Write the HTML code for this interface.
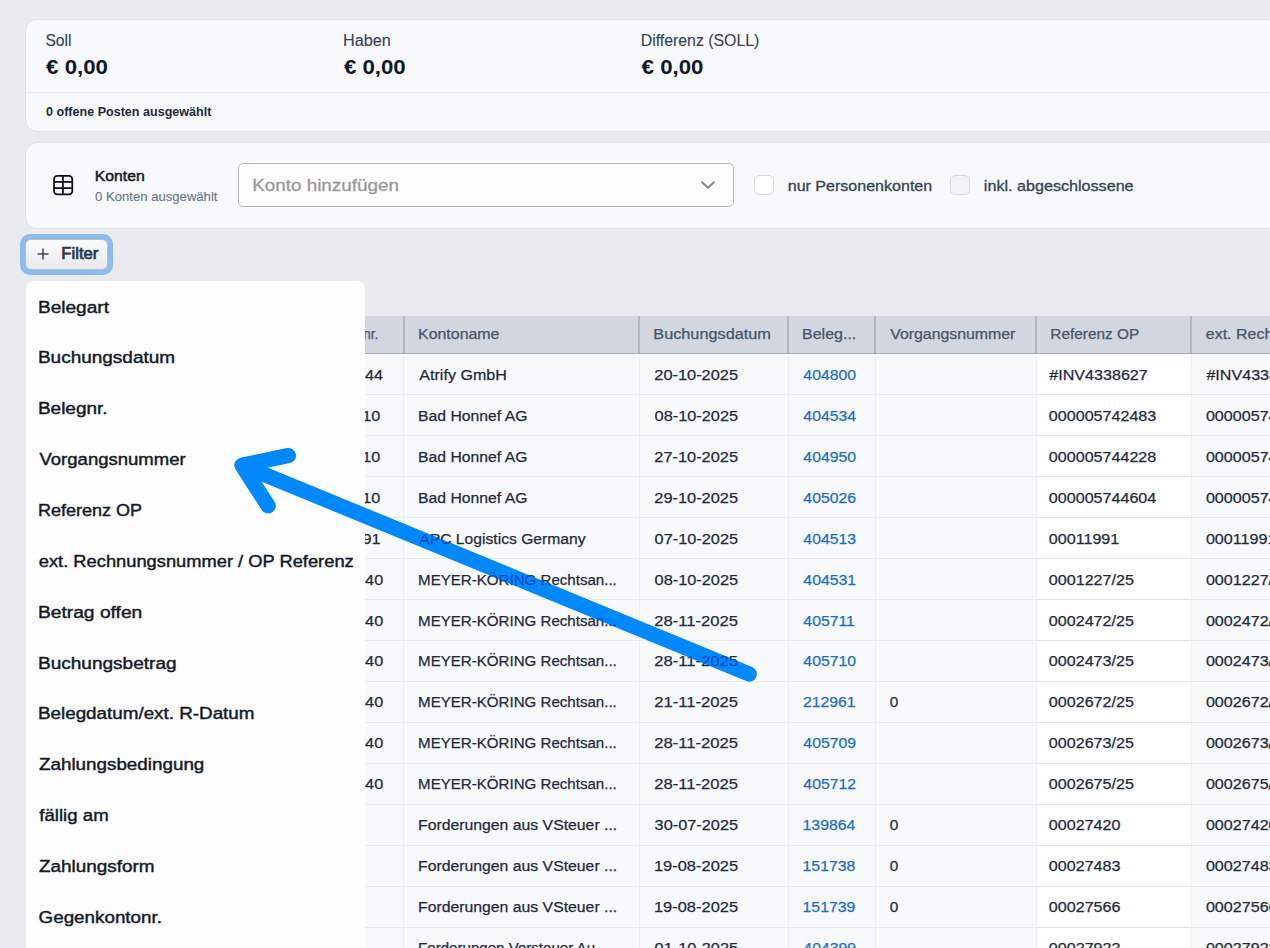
<!DOCTYPE html><html><head><meta charset="utf-8"><style>
*{box-sizing:border-box;margin:0;padding:0}
html,body{width:1270px;height:948px;overflow:hidden}
body{background:#e9ebef;font-family:"Liberation Sans",sans-serif;position:relative}
.a{position:absolute}
svg.a{left:0;top:0;overflow:visible}
text{font-family:"Liberation Sans",sans-serif;white-space:pre}
.card{position:absolute;background:#f8f9fb;border:1px solid #dfe2e7;border-radius:12px}
</style></head><body>
<div class="card" style="left:25px;top:19px;width:1300px;height:113px"></div>
<div class="a" style="left:26px;top:92px;width:1260px;height:1px;background:#e3e6ea"></div>
<div class="card" style="left:25px;top:142px;width:1300px;height:87px"></div>
<svg class="a" style="left:45px;top:168px" width="36" height="36" viewBox="0 0 36 36" fill="none" stroke="#0b1020" stroke-width="1.75"><rect x="9.05" y="7.85" width="18.2" height="18.6" rx="3.3"/><line x1="9" y1="13.9" x2="27.2" y2="13.9"/><line x1="9" y1="20.1" x2="27.2" y2="20.1"/><line x1="17.9" y1="7.9" x2="17.9" y2="26.4"/></svg>
<div class="a" style="left:238px;top:163px;width:496px;height:44px;border:1px solid #b3bbc8;border-radius:5px;background:#fdfdfe"></div>
<svg class="a" style="left:699px;top:179px" width="18" height="12" viewBox="0 0 18 12" fill="none" stroke="#7d889a" stroke-width="2" stroke-linecap="round" stroke-linejoin="round"><polyline points="3,3.3 9,8.8 14.8,3.3"/></svg>
<div class="a" style="left:754px;top:175px;width:20px;height:20px;border:1px solid #d5d9e0;border-radius:5px;background:#fff"></div>
<div class="a" style="left:950px;top:175px;width:20px;height:20px;border:1px solid #d5d9e0;border-radius:5px;background:#f1f3f6"></div>
<div class="a" style="left:20px;top:234px;width:93px;height:41px;border-radius:10px;background:#8cbbec"></div>
<div class="a" style="left:25px;top:239px;width:83px;height:31px;border-radius:6px;background:linear-gradient(#fbfbfc,#e9eaee);border:1px solid #b9bec8"></div>
<svg class="a" style="left:36px;top:247px" width="14" height="14" viewBox="0 0 14 14" stroke="#1e293b" stroke-width="1.25"><line x1="7" y1="1.5" x2="7" y2="12.5"/><line x1="1.5" y1="7" x2="12.5" y2="7"/></svg>
<div class="a" style="left:27px;top:316px;width:1300px;height:37px;background:#d1d6df"></div>
<div class="a" style="left:27px;top:353px;width:1300px;height:1px;background:#a3acba"></div>
<div class="a" style="left:27px;top:354px;width:1300px;height:700px;background:#f8f9fb"></div>
<div class="a" style="left:1037px;top:354px;width:154px;height:700px;background:#fefefe"></div>
<div class="a" style="left:403px;top:316px;width:2px;height:37px;background:#aeb6c3"></div>
<div class="a" style="left:638px;top:316px;width:2px;height:37px;background:#aeb6c3"></div>
<div class="a" style="left:787px;top:316px;width:2px;height:37px;background:#aeb6c3"></div>
<div class="a" style="left:874px;top:316px;width:2px;height:37px;background:#aeb6c3"></div>
<div class="a" style="left:1035px;top:316px;width:2px;height:37px;background:#aeb6c3"></div>
<div class="a" style="left:1190px;top:316px;width:2px;height:37px;background:#aeb6c3"></div>
<div class="a" style="left:403px;top:354px;width:1px;height:700px;background:#eceef2"></div>
<div class="a" style="left:639px;top:354px;width:1px;height:700px;background:#eceef2"></div>
<div class="a" style="left:788px;top:354px;width:1px;height:700px;background:#eceef2"></div>
<div class="a" style="left:875px;top:354px;width:1px;height:700px;background:#eceef2"></div>
<div class="a" style="left:1036px;top:354px;width:1px;height:700px;background:#eceef2"></div>
<div class="a" style="left:1191px;top:354px;width:1px;height:700px;background:#eceef2"></div>
<div class="a" style="left:27px;top:394.17px;width:1300px;height:1px;background:#e8eaee"></div>
<div class="a" style="left:1037px;top:394.17px;width:154px;height:1px;background:#dfe2e8"></div>
<div class="a" style="left:27px;top:435.14px;width:1300px;height:1px;background:#e8eaee"></div>
<div class="a" style="left:1037px;top:435.14px;width:154px;height:1px;background:#dfe2e8"></div>
<div class="a" style="left:27px;top:476.11px;width:1300px;height:1px;background:#e8eaee"></div>
<div class="a" style="left:1037px;top:476.11px;width:154px;height:1px;background:#dfe2e8"></div>
<div class="a" style="left:27px;top:517.08px;width:1300px;height:1px;background:#e8eaee"></div>
<div class="a" style="left:1037px;top:517.08px;width:154px;height:1px;background:#dfe2e8"></div>
<div class="a" style="left:27px;top:558.05px;width:1300px;height:1px;background:#e8eaee"></div>
<div class="a" style="left:1037px;top:558.05px;width:154px;height:1px;background:#dfe2e8"></div>
<div class="a" style="left:27px;top:599.02px;width:1300px;height:1px;background:#e8eaee"></div>
<div class="a" style="left:1037px;top:599.02px;width:154px;height:1px;background:#dfe2e8"></div>
<div class="a" style="left:27px;top:639.99px;width:1300px;height:1px;background:#e8eaee"></div>
<div class="a" style="left:1037px;top:639.99px;width:154px;height:1px;background:#dfe2e8"></div>
<div class="a" style="left:27px;top:680.96px;width:1300px;height:1px;background:#e8eaee"></div>
<div class="a" style="left:1037px;top:680.96px;width:154px;height:1px;background:#dfe2e8"></div>
<div class="a" style="left:27px;top:721.93px;width:1300px;height:1px;background:#e8eaee"></div>
<div class="a" style="left:1037px;top:721.93px;width:154px;height:1px;background:#dfe2e8"></div>
<div class="a" style="left:27px;top:762.90px;width:1300px;height:1px;background:#e8eaee"></div>
<div class="a" style="left:1037px;top:762.90px;width:154px;height:1px;background:#dfe2e8"></div>
<div class="a" style="left:27px;top:803.87px;width:1300px;height:1px;background:#e8eaee"></div>
<div class="a" style="left:1037px;top:803.87px;width:154px;height:1px;background:#dfe2e8"></div>
<div class="a" style="left:27px;top:844.84px;width:1300px;height:1px;background:#e8eaee"></div>
<div class="a" style="left:1037px;top:844.84px;width:154px;height:1px;background:#dfe2e8"></div>
<div class="a" style="left:27px;top:885.81px;width:1300px;height:1px;background:#e8eaee"></div>
<div class="a" style="left:1037px;top:885.81px;width:154px;height:1px;background:#dfe2e8"></div>
<div class="a" style="left:27px;top:926.78px;width:1300px;height:1px;background:#e8eaee"></div>
<div class="a" style="left:1037px;top:926.78px;width:154px;height:1px;background:#dfe2e8"></div>
<div class="a" style="left:27px;top:967.75px;width:1300px;height:1px;background:#e8eaee"></div>
<div class="a" style="left:1037px;top:967.75px;width:154px;height:1px;background:#dfe2e8"></div>
<svg class="a" width="1270" height="948"><text x="45.38" y="46.10" font-size="15.84" textLength="25.99" lengthAdjust="spacingAndGlyphs" fill="#334155" stroke="#334155" stroke-width="0.1">Soll</text><text x="343.00" y="46.10" font-size="15.84" textLength="47.81" lengthAdjust="spacingAndGlyphs" fill="#334155" stroke="#334155" stroke-width="0.1">Haben</text><text x="640.73" y="46.10" font-size="15.84" textLength="118.61" lengthAdjust="spacingAndGlyphs" fill="#334155" stroke="#334155" stroke-width="0.1">Differenz (SOLL)</text><text x="46.10" y="74.00" font-size="21.08" textLength="61.80" lengthAdjust="spacingAndGlyphs" fill="#0f172a" font-weight="bold">€ 0,00</text><text x="343.90" y="74.00" font-size="21.08" textLength="61.80" lengthAdjust="spacingAndGlyphs" fill="#0f172a" font-weight="bold">€ 0,00</text><text x="641.60" y="74.00" font-size="21.08" textLength="61.80" lengthAdjust="spacingAndGlyphs" fill="#0f172a" font-weight="bold">€ 0,00</text><text x="46.02" y="116.30" font-size="12.94" textLength="165.41" lengthAdjust="spacingAndGlyphs" fill="#1e293b" font-weight="bold">0 offene Posten ausgewählt</text><text x="94.74" y="180.70" font-size="15.26" textLength="49.95" lengthAdjust="spacingAndGlyphs" fill="#111827" stroke="#111827" stroke-width="0.5">Konten</text><text x="95.11" y="200.80" font-size="12.79" textLength="122.36" lengthAdjust="spacingAndGlyphs" fill="#64748b" stroke="#64748b" stroke-width="0.1">0 Konten ausgewählt</text><text x="252.19" y="191.40" font-size="17.30" textLength="146.77" lengthAdjust="spacingAndGlyphs" fill="#989898" stroke="#989898" stroke-width="0.3">Konto hinzufügen</text><text x="787.74" y="190.60" font-size="15.26" textLength="144.46" lengthAdjust="spacingAndGlyphs" fill="#334155" stroke="#334155" stroke-width="0.3">nur Personenkonten</text><text x="983.83" y="190.60" font-size="15.26" textLength="149.75" lengthAdjust="spacingAndGlyphs" fill="#334155" stroke="#334155" stroke-width="0.3">inkl. abgeschlossene</text><text x="61.37" y="259.20" font-size="15.84" textLength="37.05" lengthAdjust="spacingAndGlyphs" fill="#2b3648" stroke="#2b3648" stroke-width="0.7">Filter</text><text x="363.26" y="339.30" font-size="14.53" textLength="15.03" lengthAdjust="spacingAndGlyphs" fill="#475569" stroke="#475569" stroke-width="0.25">nr.</text><text x="418.03" y="339.30" font-size="14.53" textLength="81.45" lengthAdjust="spacingAndGlyphs" fill="#475569" stroke="#475569" stroke-width="0.25">Kontoname</text><text x="653.30" y="339.30" font-size="14.53" textLength="117.53" lengthAdjust="spacingAndGlyphs" fill="#475569" stroke="#475569" stroke-width="0.25">Buchungsdatum</text><text x="802.02" y="339.30" font-size="14.53" textLength="54.29" lengthAdjust="spacingAndGlyphs" fill="#475569" stroke="#475569" stroke-width="0.25">Beleg...</text><text x="890.20" y="339.30" font-size="14.53" textLength="125.21" lengthAdjust="spacingAndGlyphs" fill="#475569" stroke="#475569" stroke-width="0.25">Vorgangsnummer</text><text x="1050.37" y="339.30" font-size="14.53" textLength="88.95" lengthAdjust="spacingAndGlyphs" fill="#475569" stroke="#475569" stroke-width="0.25">Referenz OP</text><text x="1205.76" y="339.30" font-size="14.53" textLength="169.74" lengthAdjust="spacingAndGlyphs" fill="#475569" stroke="#475569" stroke-width="0.25">ext. Rechnungsnummer</text><text x="364.95" y="379.80" font-size="15.33" textLength="18.08" lengthAdjust="spacingAndGlyphs" fill="#1e293b" stroke="#1e293b" stroke-width="0.25">44</text><text x="419.30" y="379.80" font-size="15.33" textLength="87.56" lengthAdjust="spacingAndGlyphs" fill="#1e293b" stroke="#1e293b" stroke-width="0.25">Atrify GmbH</text><text x="654.28" y="379.80" font-size="15.33" textLength="83.81" lengthAdjust="spacingAndGlyphs" fill="#1e293b" stroke="#1e293b" stroke-width="0.25">20-10-2025</text><text x="803.38" y="379.80" font-size="15.33" textLength="52.70" lengthAdjust="spacingAndGlyphs" fill="#1a6cc8" stroke="#1a6cc8" stroke-width="0.25">404800</text><text x="1049.30" y="379.80" font-size="15.33" textLength="98.48" lengthAdjust="spacingAndGlyphs" fill="#1e293b" stroke="#1e293b" stroke-width="0.25">#INV4338627</text><text x="1206.40" y="379.80" font-size="15.33" textLength="98.48" lengthAdjust="spacingAndGlyphs" fill="#1e293b" stroke="#1e293b" stroke-width="0.25">#INV4338627</text><text x="362.31" y="420.75" font-size="15.33" textLength="18.08" lengthAdjust="spacingAndGlyphs" fill="#1e293b" stroke="#1e293b" stroke-width="0.25">10</text><text x="418.05" y="420.75" font-size="15.33" textLength="109.41" lengthAdjust="spacingAndGlyphs" fill="#1e293b" stroke="#1e293b" stroke-width="0.25">Bad Honnef AG</text><text x="654.61" y="420.75" font-size="15.33" textLength="83.48" lengthAdjust="spacingAndGlyphs" fill="#1e293b" stroke="#1e293b" stroke-width="0.25">08-10-2025</text><text x="803.38" y="420.75" font-size="15.33" textLength="52.70" lengthAdjust="spacingAndGlyphs" fill="#1a6cc8" stroke="#1a6cc8" stroke-width="0.25">404534</text><text x="1048.82" y="420.75" font-size="15.33" textLength="107.46" lengthAdjust="spacingAndGlyphs" fill="#1e293b" stroke="#1e293b" stroke-width="0.25">000005742483</text><text x="1205.92" y="420.75" font-size="15.33" textLength="107.46" lengthAdjust="spacingAndGlyphs" fill="#1e293b" stroke="#1e293b" stroke-width="0.25">000005742483</text><text x="362.31" y="461.70" font-size="15.33" textLength="18.08" lengthAdjust="spacingAndGlyphs" fill="#1e293b" stroke="#1e293b" stroke-width="0.25">10</text><text x="418.05" y="461.70" font-size="15.33" textLength="109.41" lengthAdjust="spacingAndGlyphs" fill="#1e293b" stroke="#1e293b" stroke-width="0.25">Bad Honnef AG</text><text x="654.28" y="461.70" font-size="15.33" textLength="83.81" lengthAdjust="spacingAndGlyphs" fill="#1e293b" stroke="#1e293b" stroke-width="0.25">27-10-2025</text><text x="803.38" y="461.70" font-size="15.33" textLength="52.70" lengthAdjust="spacingAndGlyphs" fill="#1a6cc8" stroke="#1a6cc8" stroke-width="0.25">404950</text><text x="1048.82" y="461.70" font-size="15.33" textLength="107.46" lengthAdjust="spacingAndGlyphs" fill="#1e293b" stroke="#1e293b" stroke-width="0.25">000005744228</text><text x="1205.92" y="461.70" font-size="15.33" textLength="107.46" lengthAdjust="spacingAndGlyphs" fill="#1e293b" stroke="#1e293b" stroke-width="0.25">000005744228</text><text x="362.31" y="502.65" font-size="15.33" textLength="18.08" lengthAdjust="spacingAndGlyphs" fill="#1e293b" stroke="#1e293b" stroke-width="0.25">10</text><text x="418.05" y="502.65" font-size="15.33" textLength="109.41" lengthAdjust="spacingAndGlyphs" fill="#1e293b" stroke="#1e293b" stroke-width="0.25">Bad Honnef AG</text><text x="654.28" y="502.65" font-size="15.33" textLength="83.81" lengthAdjust="spacingAndGlyphs" fill="#1e293b" stroke="#1e293b" stroke-width="0.25">29-10-2025</text><text x="803.38" y="502.65" font-size="15.33" textLength="52.70" lengthAdjust="spacingAndGlyphs" fill="#1a6cc8" stroke="#1a6cc8" stroke-width="0.25">405026</text><text x="1048.82" y="502.65" font-size="15.33" textLength="107.46" lengthAdjust="spacingAndGlyphs" fill="#1e293b" stroke="#1e293b" stroke-width="0.25">000005744604</text><text x="1205.92" y="502.65" font-size="15.33" textLength="107.46" lengthAdjust="spacingAndGlyphs" fill="#1e293b" stroke="#1e293b" stroke-width="0.25">000005744604</text><text x="362.47" y="543.60" font-size="15.33" textLength="18.08" lengthAdjust="spacingAndGlyphs" fill="#1e293b" stroke="#1e293b" stroke-width="0.25">91</text><text x="419.30" y="543.60" font-size="15.33" textLength="166.30" lengthAdjust="spacingAndGlyphs" fill="#1e293b" stroke="#1e293b" stroke-width="0.25">APC Logistics Germany</text><text x="654.61" y="543.60" font-size="15.33" textLength="83.48" lengthAdjust="spacingAndGlyphs" fill="#1e293b" stroke="#1e293b" stroke-width="0.25">07-10-2025</text><text x="803.38" y="543.60" font-size="15.33" textLength="52.70" lengthAdjust="spacingAndGlyphs" fill="#1a6cc8" stroke="#1a6cc8" stroke-width="0.25">404513</text><text x="1048.82" y="543.60" font-size="15.33" textLength="70.44" lengthAdjust="spacingAndGlyphs" fill="#1e293b" stroke="#1e293b" stroke-width="0.25">00011991</text><text x="1205.92" y="543.60" font-size="15.33" textLength="70.44" lengthAdjust="spacingAndGlyphs" fill="#1e293b" stroke="#1e293b" stroke-width="0.25">00011991</text><text x="365.11" y="584.55" font-size="15.33" textLength="18.08" lengthAdjust="spacingAndGlyphs" fill="#1e293b" stroke="#1e293b" stroke-width="0.25">40</text><text x="418.09" y="584.55" font-size="15.33" textLength="198.73" lengthAdjust="spacingAndGlyphs" fill="#1e293b" stroke="#1e293b" stroke-width="0.25">MEYER-KÖRING Rechtsan...</text><text x="654.61" y="584.55" font-size="15.33" textLength="83.48" lengthAdjust="spacingAndGlyphs" fill="#1e293b" stroke="#1e293b" stroke-width="0.25">08-10-2025</text><text x="803.38" y="584.55" font-size="15.33" textLength="52.70" lengthAdjust="spacingAndGlyphs" fill="#1a6cc8" stroke="#1a6cc8" stroke-width="0.25">404531</text><text x="1048.82" y="584.55" font-size="15.33" textLength="85.06" lengthAdjust="spacingAndGlyphs" fill="#1e293b" stroke="#1e293b" stroke-width="0.25">0001227/25</text><text x="1205.92" y="584.55" font-size="15.33" textLength="85.06" lengthAdjust="spacingAndGlyphs" fill="#1e293b" stroke="#1e293b" stroke-width="0.25">0001227/25</text><text x="365.11" y="625.50" font-size="15.33" textLength="18.08" lengthAdjust="spacingAndGlyphs" fill="#1e293b" stroke="#1e293b" stroke-width="0.25">40</text><text x="418.09" y="625.50" font-size="15.33" textLength="198.73" lengthAdjust="spacingAndGlyphs" fill="#1e293b" stroke="#1e293b" stroke-width="0.25">MEYER-KÖRING Rechtsan...</text><text x="654.27" y="625.50" font-size="15.33" textLength="83.83" lengthAdjust="spacingAndGlyphs" fill="#1e293b" stroke="#1e293b" stroke-width="0.25">28-11-2025</text><text x="803.38" y="625.50" font-size="15.33" textLength="51.53" lengthAdjust="spacingAndGlyphs" fill="#1a6cc8" stroke="#1a6cc8" stroke-width="0.25">405711</text><text x="1048.82" y="625.50" font-size="15.33" textLength="85.06" lengthAdjust="spacingAndGlyphs" fill="#1e293b" stroke="#1e293b" stroke-width="0.25">0002472/25</text><text x="1205.92" y="625.50" font-size="15.33" textLength="85.06" lengthAdjust="spacingAndGlyphs" fill="#1e293b" stroke="#1e293b" stroke-width="0.25">0002472/25</text><text x="365.11" y="666.45" font-size="15.33" textLength="18.08" lengthAdjust="spacingAndGlyphs" fill="#1e293b" stroke="#1e293b" stroke-width="0.25">40</text><text x="418.09" y="666.45" font-size="15.33" textLength="198.73" lengthAdjust="spacingAndGlyphs" fill="#1e293b" stroke="#1e293b" stroke-width="0.25">MEYER-KÖRING Rechtsan...</text><text x="654.27" y="666.45" font-size="15.33" textLength="83.83" lengthAdjust="spacingAndGlyphs" fill="#1e293b" stroke="#1e293b" stroke-width="0.25">28-11-2025</text><text x="803.38" y="666.45" font-size="15.33" textLength="52.70" lengthAdjust="spacingAndGlyphs" fill="#1a6cc8" stroke="#1a6cc8" stroke-width="0.25">405710</text><text x="1048.82" y="666.45" font-size="15.33" textLength="85.06" lengthAdjust="spacingAndGlyphs" fill="#1e293b" stroke="#1e293b" stroke-width="0.25">0002473/25</text><text x="1205.92" y="666.45" font-size="15.33" textLength="85.06" lengthAdjust="spacingAndGlyphs" fill="#1e293b" stroke="#1e293b" stroke-width="0.25">0002473/25</text><text x="365.11" y="707.40" font-size="15.33" textLength="18.08" lengthAdjust="spacingAndGlyphs" fill="#1e293b" stroke="#1e293b" stroke-width="0.25">40</text><text x="418.09" y="707.40" font-size="15.33" textLength="198.73" lengthAdjust="spacingAndGlyphs" fill="#1e293b" stroke="#1e293b" stroke-width="0.25">MEYER-KÖRING Rechtsan...</text><text x="654.27" y="707.40" font-size="15.33" textLength="83.83" lengthAdjust="spacingAndGlyphs" fill="#1e293b" stroke="#1e293b" stroke-width="0.25">21-11-2025</text><text x="802.91" y="707.40" font-size="15.33" textLength="52.70" lengthAdjust="spacingAndGlyphs" fill="#1a6cc8" stroke="#1a6cc8" stroke-width="0.25">212961</text><text x="889.84" y="707.40" font-size="15.33" textLength="8.53" lengthAdjust="spacingAndGlyphs" fill="#1e293b" stroke="#1e293b" stroke-width="0.25">0</text><text x="1048.82" y="707.40" font-size="15.33" textLength="85.06" lengthAdjust="spacingAndGlyphs" fill="#1e293b" stroke="#1e293b" stroke-width="0.25">0002672/25</text><text x="1205.92" y="707.40" font-size="15.33" textLength="85.06" lengthAdjust="spacingAndGlyphs" fill="#1e293b" stroke="#1e293b" stroke-width="0.25">0002672/25</text><text x="365.11" y="748.35" font-size="15.33" textLength="18.08" lengthAdjust="spacingAndGlyphs" fill="#1e293b" stroke="#1e293b" stroke-width="0.25">40</text><text x="418.09" y="748.35" font-size="15.33" textLength="198.73" lengthAdjust="spacingAndGlyphs" fill="#1e293b" stroke="#1e293b" stroke-width="0.25">MEYER-KÖRING Rechtsan...</text><text x="654.27" y="748.35" font-size="15.33" textLength="83.83" lengthAdjust="spacingAndGlyphs" fill="#1e293b" stroke="#1e293b" stroke-width="0.25">28-11-2025</text><text x="803.38" y="748.35" font-size="15.33" textLength="52.70" lengthAdjust="spacingAndGlyphs" fill="#1a6cc8" stroke="#1a6cc8" stroke-width="0.25">405709</text><text x="1048.82" y="748.35" font-size="15.33" textLength="85.06" lengthAdjust="spacingAndGlyphs" fill="#1e293b" stroke="#1e293b" stroke-width="0.25">0002673/25</text><text x="1205.92" y="748.35" font-size="15.33" textLength="85.06" lengthAdjust="spacingAndGlyphs" fill="#1e293b" stroke="#1e293b" stroke-width="0.25">0002673/25</text><text x="365.11" y="789.30" font-size="15.33" textLength="18.08" lengthAdjust="spacingAndGlyphs" fill="#1e293b" stroke="#1e293b" stroke-width="0.25">40</text><text x="418.09" y="789.30" font-size="15.33" textLength="198.73" lengthAdjust="spacingAndGlyphs" fill="#1e293b" stroke="#1e293b" stroke-width="0.25">MEYER-KÖRING Rechtsan...</text><text x="654.27" y="789.30" font-size="15.33" textLength="83.83" lengthAdjust="spacingAndGlyphs" fill="#1e293b" stroke="#1e293b" stroke-width="0.25">28-11-2025</text><text x="803.38" y="789.30" font-size="15.33" textLength="52.70" lengthAdjust="spacingAndGlyphs" fill="#1a6cc8" stroke="#1a6cc8" stroke-width="0.25">405712</text><text x="1048.82" y="789.30" font-size="15.33" textLength="85.06" lengthAdjust="spacingAndGlyphs" fill="#1e293b" stroke="#1e293b" stroke-width="0.25">0002675/25</text><text x="1205.92" y="789.30" font-size="15.33" textLength="85.06" lengthAdjust="spacingAndGlyphs" fill="#1e293b" stroke="#1e293b" stroke-width="0.25">0002675/25</text><text x="418.04" y="830.25" font-size="15.33" textLength="199.15" lengthAdjust="spacingAndGlyphs" fill="#1e293b" stroke="#1e293b" stroke-width="0.25">Forderungen aus VSteuer ...</text><text x="654.61" y="830.25" font-size="15.33" textLength="83.48" lengthAdjust="spacingAndGlyphs" fill="#1e293b" stroke="#1e293b" stroke-width="0.25">30-07-2025</text><text x="802.59" y="830.25" font-size="15.33" textLength="52.70" lengthAdjust="spacingAndGlyphs" fill="#1a6cc8" stroke="#1a6cc8" stroke-width="0.25">139864</text><text x="889.84" y="830.25" font-size="15.33" textLength="8.53" lengthAdjust="spacingAndGlyphs" fill="#1e293b" stroke="#1e293b" stroke-width="0.25">0</text><text x="1048.82" y="830.25" font-size="15.33" textLength="71.64" lengthAdjust="spacingAndGlyphs" fill="#1e293b" stroke="#1e293b" stroke-width="0.25">00027420</text><text x="1205.92" y="830.25" font-size="15.33" textLength="71.64" lengthAdjust="spacingAndGlyphs" fill="#1e293b" stroke="#1e293b" stroke-width="0.25">00027420</text><text x="418.04" y="871.20" font-size="15.33" textLength="199.15" lengthAdjust="spacingAndGlyphs" fill="#1e293b" stroke="#1e293b" stroke-width="0.25">Forderungen aus VSteuer ...</text><text x="653.95" y="871.20" font-size="15.33" textLength="84.15" lengthAdjust="spacingAndGlyphs" fill="#1e293b" stroke="#1e293b" stroke-width="0.25">19-08-2025</text><text x="802.59" y="871.20" font-size="15.33" textLength="52.70" lengthAdjust="spacingAndGlyphs" fill="#1a6cc8" stroke="#1a6cc8" stroke-width="0.25">151738</text><text x="889.84" y="871.20" font-size="15.33" textLength="8.53" lengthAdjust="spacingAndGlyphs" fill="#1e293b" stroke="#1e293b" stroke-width="0.25">0</text><text x="1048.82" y="871.20" font-size="15.33" textLength="71.64" lengthAdjust="spacingAndGlyphs" fill="#1e293b" stroke="#1e293b" stroke-width="0.25">00027483</text><text x="1205.92" y="871.20" font-size="15.33" textLength="71.64" lengthAdjust="spacingAndGlyphs" fill="#1e293b" stroke="#1e293b" stroke-width="0.25">00027483</text><text x="418.04" y="912.15" font-size="15.33" textLength="199.15" lengthAdjust="spacingAndGlyphs" fill="#1e293b" stroke="#1e293b" stroke-width="0.25">Forderungen aus VSteuer ...</text><text x="653.95" y="912.15" font-size="15.33" textLength="84.15" lengthAdjust="spacingAndGlyphs" fill="#1e293b" stroke="#1e293b" stroke-width="0.25">19-08-2025</text><text x="802.59" y="912.15" font-size="15.33" textLength="52.70" lengthAdjust="spacingAndGlyphs" fill="#1a6cc8" stroke="#1a6cc8" stroke-width="0.25">151739</text><text x="889.84" y="912.15" font-size="15.33" textLength="8.53" lengthAdjust="spacingAndGlyphs" fill="#1e293b" stroke="#1e293b" stroke-width="0.25">0</text><text x="1048.82" y="912.15" font-size="15.33" textLength="71.64" lengthAdjust="spacingAndGlyphs" fill="#1e293b" stroke="#1e293b" stroke-width="0.25">00027566</text><text x="1205.92" y="912.15" font-size="15.33" textLength="71.64" lengthAdjust="spacingAndGlyphs" fill="#1e293b" stroke="#1e293b" stroke-width="0.25">00027566</text><text x="418.10" y="953.10" font-size="15.33" textLength="189.52" lengthAdjust="spacingAndGlyphs" fill="#1e293b" stroke="#1e293b" stroke-width="0.25">Forderungen Vorsteuer Au...</text><text x="654.61" y="953.10" font-size="15.33" textLength="83.48" lengthAdjust="spacingAndGlyphs" fill="#1e293b" stroke="#1e293b" stroke-width="0.25">01-10-2025</text><text x="803.38" y="953.10" font-size="15.33" textLength="52.70" lengthAdjust="spacingAndGlyphs" fill="#1a6cc8" stroke="#1a6cc8" stroke-width="0.25">404399</text><text x="1048.82" y="953.10" font-size="15.33" textLength="71.64" lengthAdjust="spacingAndGlyphs" fill="#1e293b" stroke="#1e293b" stroke-width="0.25">00027922</text><text x="1205.92" y="953.10" font-size="15.33" textLength="71.64" lengthAdjust="spacingAndGlyphs" fill="#1e293b" stroke="#1e293b" stroke-width="0.25">00027922</text></svg>
<div class="a" style="left:26px;top:281px;width:339px;height:700px;background:#fdfdfd;border-radius:8px"></div>
<svg class="a" width="1270" height="948"><text x="37.98" y="312.60" font-size="16.86" textLength="70.98" lengthAdjust="spacingAndGlyphs" fill="#111827" stroke="#111827" stroke-width="0.42">Belegart</text><text x="37.98" y="363.45" font-size="16.86" textLength="137.11" lengthAdjust="spacingAndGlyphs" fill="#111827" stroke="#111827" stroke-width="0.42">Buchungsdatum</text><text x="37.98" y="414.30" font-size="16.86" textLength="69.58" lengthAdjust="spacingAndGlyphs" fill="#111827" stroke="#111827" stroke-width="0.42">Belegnr.</text><text x="39.50" y="465.15" font-size="16.86" textLength="146.14" lengthAdjust="spacingAndGlyphs" fill="#111827" stroke="#111827" stroke-width="0.42">Vorgangsnummer</text><text x="38.06" y="516.00" font-size="16.86" textLength="103.98" lengthAdjust="spacingAndGlyphs" fill="#111827" stroke="#111827" stroke-width="0.42">Referenz OP</text><text x="38.77" y="566.85" font-size="16.86" textLength="314.96" lengthAdjust="spacingAndGlyphs" fill="#111827" stroke="#111827" stroke-width="0.42">ext. Rechnungsnummer / OP Referenz</text><text x="37.96" y="617.70" font-size="16.86" textLength="104.32" lengthAdjust="spacingAndGlyphs" fill="#111827" stroke="#111827" stroke-width="0.42">Betrag offen</text><text x="37.98" y="668.55" font-size="16.86" textLength="138.59" lengthAdjust="spacingAndGlyphs" fill="#111827" stroke="#111827" stroke-width="0.42">Buchungsbetrag</text><text x="37.99" y="719.40" font-size="16.86" textLength="216.49" lengthAdjust="spacingAndGlyphs" fill="#111827" stroke="#111827" stroke-width="0.42">Belegdatum/ext. R-Datum</text><text x="38.94" y="770.25" font-size="16.86" textLength="165.42" lengthAdjust="spacingAndGlyphs" fill="#111827" stroke="#111827" stroke-width="0.42">Zahlungsbedingung</text><text x="39.31" y="821.10" font-size="16.86" textLength="69.36" lengthAdjust="spacingAndGlyphs" fill="#111827" stroke="#111827" stroke-width="0.42">fällig am</text><text x="38.93" y="871.95" font-size="16.86" textLength="115.66" lengthAdjust="spacingAndGlyphs" fill="#111827" stroke="#111827" stroke-width="0.42">Zahlungsform</text><text x="38.56" y="922.80" font-size="16.86" textLength="123.39" lengthAdjust="spacingAndGlyphs" fill="#111827" stroke="#111827" stroke-width="0.42">Gegenkontonr.</text></svg>
<svg class="a" width="1270" height="948" viewBox="0 0 1270 948"><g fill="none" stroke="#0088ff" stroke-width="15.3" stroke-linecap="round" stroke-linejoin="round"><path d="M749.2,674 L242,465.3 M288.4,455.6 L242,465.3 L268.1,505.8"/></g></svg>
<svg class="a" width="1270" height="948" viewBox="0 0 1270 948"><defs><mask id="am" maskUnits="userSpaceOnUse" x="0" y="0" width="1270" height="948"><path d="M749.2,674 L242,465.3 M288.4,455.6 L242,465.3 L268.1,505.8" fill="none" stroke="#fff" stroke-width="15.3" stroke-linecap="round" stroke-linejoin="round"/></mask></defs><g mask="url(#am)"><text x="419.30" y="543.60" font-size="15.33" textLength="166.30" lengthAdjust="spacingAndGlyphs" fill="#0a4cc0" stroke="#0a4cc0" stroke-width="0.25">APC Logistics Germany</text><text x="654.61" y="543.60" font-size="15.33" textLength="83.48" lengthAdjust="spacingAndGlyphs" fill="#0a4cc0" stroke="#0a4cc0" stroke-width="0.25">07-10-2025</text><text x="418.09" y="584.55" font-size="15.33" textLength="198.73" lengthAdjust="spacingAndGlyphs" fill="#0a4cc0" stroke="#0a4cc0" stroke-width="0.25">MEYER-KÖRING Rechtsan...</text><text x="654.61" y="584.55" font-size="15.33" textLength="83.48" lengthAdjust="spacingAndGlyphs" fill="#0a4cc0" stroke="#0a4cc0" stroke-width="0.25">08-10-2025</text><text x="418.09" y="625.50" font-size="15.33" textLength="198.73" lengthAdjust="spacingAndGlyphs" fill="#0a4cc0" stroke="#0a4cc0" stroke-width="0.25">MEYER-KÖRING Rechtsan...</text><text x="654.27" y="625.50" font-size="15.33" textLength="83.83" lengthAdjust="spacingAndGlyphs" fill="#0a4cc0" stroke="#0a4cc0" stroke-width="0.25">28-11-2025</text><text x="418.09" y="666.45" font-size="15.33" textLength="198.73" lengthAdjust="spacingAndGlyphs" fill="#0a4cc0" stroke="#0a4cc0" stroke-width="0.25">MEYER-KÖRING Rechtsan...</text><text x="654.27" y="666.45" font-size="15.33" textLength="83.83" lengthAdjust="spacingAndGlyphs" fill="#0a4cc0" stroke="#0a4cc0" stroke-width="0.25">28-11-2025</text></g></svg>
</body></html>
